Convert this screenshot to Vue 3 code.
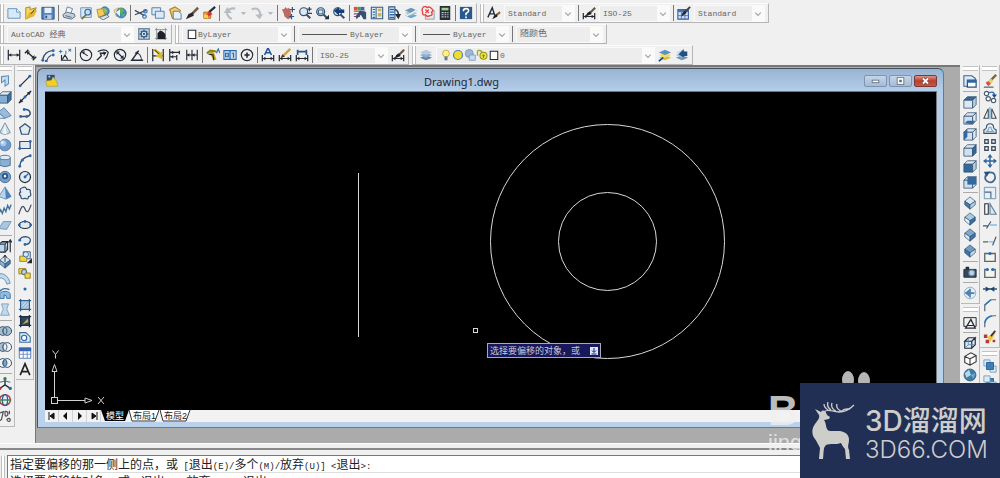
<script setup>
const K = '#222b36'
const B = '#2a68ad'
const D = '#34506f'
const L = '#c3d9ee'
const G = '#f0c22e'

const p = (d, s = K, w = 1.3, f = 'none') =>
  `<path d="${d}" stroke="${s}" stroke-width="${w}" fill="${f}"/>`
const c = (x, y, r, f = 'none', s = K, w = 1.3) =>
  `<circle cx="${x}" cy="${y}" r="${r}" fill="${f}" stroke="${s}" stroke-width="${w}"/>`
const dot = (x, y, r = 1.6, f = B) => `<circle cx="${x}" cy="${y}" r="${r}" fill="${f}"/>`
const fill = (d, f) => `<path d="${d}" fill="${f}"/>`

const box = (top, front, side) =>
  p('M1 6L5 2H15L11 6Z', D, 0.9, top) + p('M1 6H11V15H1Z', D, 0.9, front) + p('M11 6L15 2V11L11 15Z', D, 0.9, side)
const diamond = (a, b, t) =>
  p('M2 6L8 1L14 6L8 10Z', D, 0.8, t) + p('M2 6L8 10V15L2 10Z', D, 0.8, a) + p('M14 6L8 10V15L14 10Z', D, 0.8, b)
const rings = (a, m, b) =>
  c(5.5, 8, 5, a, D, 1.1) + c(10.5, 8, 5, b, D, 1.1) + p('M8 3.8A5 5 0 0 1 8 12.2A5 5 0 0 1 8 3.8Z', D, 1, m)
const lens = p('M9 9L14 14', D, 2.4) + c(6.5, 6.5, 4.5, '#dbe9f6', D, 1.4)
const sheets = (a, b, d) => fill('M1 11L8 8L15 11L8 14Z', a) + fill('M1 8L8 5L15 8L8 11Z', b) + fill('M1 5L8 2L15 5L8 8Z', d)
const dim = p('M1.5 8V15M14.5 8V15M1.5 12H14.5', K, 1.4) + fill('M2 12L5 10V14ZM14 12L11 10V14Z', K)

const icons = {
  new: p('M1 3H11L15 7V14H1Z', '#5d8db8', 1, '#d5e9f8') + p('M11 3V7H15', '#5d8db8', 1, '#fff'),
  open: p('M2 15V2L7 1V4L14 2L11 10Z', '#a88216', 1, '#f5d565') + fill('M2 15L6 7L15 5L11 12Z', '#e7b52a') + p('M8 9L12 4', K, 1),
  save: p('M1 1.5H15V15H1Z', '#294d80', 1, '#5585bd') + fill('M4 2H12V8H4Z', '#e8f1fa') + fill('M4 10H12V15H4Z', '#b6cde5') + fill('M5 11H7V14H5Z', '#294d80'),
  print: p('M4 8L6 1L12 3L10 9', '#687b91', 1, '#eff5fb') + p('M1 10L5 7L14 9L15 12L11 15L2 13Z', '#53667d', 1, '#c3cedb') + p('M4 11L11 13', '#53667d', 1),
  preview: p('M2 2H14V13H2Z', '#638ab3', 1, '#d8eaf9') + c(10, 7, 3.3, '#bfddf4', '#3b6796') + p('M8 10L3 15', '#826b3b', 2),
  publish: c(10, 6, 5, '#4e91cb', '#20669c', 1) + fill('M7 2L12 3L13 7L8 8Z', '#8fc068') + p('M1 4L8 3L10 10L3 13Z', '#b98b21', 1, '#f1cc59') + p('M4 13L12 10L15 12L8 16Z', '#566c84', 1, '#d9e1e9'),
  globe: p('M1 5L6 2L9 9L4 12Z', '#c1a459', 1, '#f7e9b1') + c(9.5, 8, 5.7, '#3a8aca', '#52789a', 1) + fill('M6 4L10 2L13 5L9 9ZM9 10L14 8L12 13Z', '#64b256') + fill('M3 7L8 4V12Z', '#e5f2fb'),
  cut: p('M1 5L12 11M1 10L14 5', '#3f5067', 1.5) + c(12, 12, 2, 'none', B) + c(13, 6, 2, 'none', B),
  copy: p('M1 2H11V10H1Z', '#48779f', 1, '#dceaf7') + p('M5 6H15V14H5Z', '#48779f', 1, '#dceaf7'),
  paste: p('M2 4L8 1L14 5L12 14L5 14Z', '#a67923', 1.2, '#f1cb67') + p('M6 6H12L15 9V15H6Z', '#4b769c', 1, '#e4f1fc'),
  match: p('M15 2L8 9', '#765d4b', 3) + fill('M9 7L10 11L1 15L4 9Z', '#2a2a2a'),
  block: p('M2 7H10V14H2Z', '#a3671e', 1, '#f0a83a') + p('M15 1L8 7', K, 2.4) + fill('M8 6L12 9L3 15L5 10Z', '#cf3730') + fill('M2 10H7V14H2Z', '#f8d23f'),
  undo: p('M10 15Q2 10 6 5Q9 2 14 3', '#b7bcc2', 2.4) + fill('M1 8L5 1L10 8Z', '#b7bcc2'),
  redo: p('M2 4C8 1 13 5 11 12', '#b7bcc2', 2.4) + fill('M6 10L15 9L11 15Z', '#b7bcc2'),
  caret: fill('M2 6H14L8 12Z', '#a9afb7'),
  pan: fill('M1 4L4 3L5 1L7 3L9 2L11 5L12 13L8 15L4 12L3 8Z', '#bc6b63') + p('M13 1V7M10 4H16M12 9V15M9 12H15', '#2c568c', 1.4),
  zoom: lens + p('M13 1V6M10.5 3.5H15.5M11 8.5H16', '#1c4270', 1.3),
  zoomwin: lens + p('M4 4.5H9V9H4Z', '#294f78', 1) + fill('M11 15H16V10Z', K),
  zoomprev: lens + fill('M2 5L8 1V4L14 4V8H8V11Z', '#153e78'),
  props: fill('M1 1H5V5H1Z', '#e04e3f') + fill('M5 1H9V5H5Z', '#45a345') + fill('M9 1H13V5H9Z', '#3b61c1') + p('M1 6H14M1 9H9M1 12H8', '#9c486b', 1.4) + fill('M8 5L15 7V15H12L9 10L4 15L3 12Z', '#374f73'),
  center: p('M1.5 1.5H14.5V14.5H1.5Z', '#315985', 1.2, '#e3edf7') + p('M7 2V14', D, 1) + p('M3 4H6M3 7H6M3 10H6M3 13H6', B, 1.4) + fill('M9 3H13V6H9ZM9 8H13V12H9Z', '#d5b14b'),
  palette: p('M2 1H9V15H2Z', '#285383', 1.2, '#e4eef8') + p('M3 4H8M3 7H8M3 10H8M3 13H8', B, 1.5) + p('M9 4Q13 5 13 10', D, 2) + fill('M9 9H16L13 15Z', K),
  sheet: sheets('#6fa8ca', '#aac4cc', '#6c97bb') + p('M2 12L14 5', '#eff6fb', 1.5),
  markup: p('M5 5H15V15H5Z', '#8994a0', 1, '#e5e8ec') + p('M3 1Q6 0 7 2Q10 0 12 3Q15 5 12 7Q14 11 10 11Q7 13 5 10Q1 11 2 7Q0 4 3 1Z', '#e34644', 1.6, '#fff2f2') + p('M5 4L9 8M9 4L5 8', '#e34644', 1.5),
  calc: fill('M2 0H14V16H2Z', '#262d35') + fill('M4 2H12V5H4Z', '#9fd18c') + p('M4 7.5H12M4 10H12M4 12.5H12', '#b6c1cc', 1.4) + p('M7 6V14M10 6V14', '#262d35', 1),
  help: fill('M1 1H15V15H1Z', '#28588d') + p('M5 6Q5 3 8 3Q11 3 11 5.5Q11 7 8 8.5V10.5', '#fff', 1.8) + fill('M7 12H9V14H7Z', '#fff'),
  tstyle: p('M1 13L6 2L9 11M3 9H8', K, 1.6) + p('M15 7L10 11', '#8d653b', 2.4) + fill('M11 9L12 12L6 15L8 11Z', '#222'),
  dstyle: dim + p('M15 2L9 8', '#6b5440', 2.4) + fill('M9 6L11 9L4 12L6 8Z', '#222'),
  tabstyle: p('M1 4H13V15H1Z', '#2d5aa0', 1.2, '#d5e4f7') + fill('M1 4H13V7H1Z', '#4272bb') + p('M1 11H13M5 7V15M9 7V15', '#4272bb', 1) + p('M15 1L9 7', '#4c4038', 2.4) + fill('M9 5L11 8L5 12L6 8Z', K),
  gear: p('M2 2H14V14H2Z', '#758ba1', 1.6, '#c8d9e8') + p('M8 3V13M3 8H13M4.500 4.500L11.500 11.500M11.500 4.500L4.500 11.500', '#355a81', 1.6) + c(8, 8, 3.3, '#e2edf7', '#355a81', 1.6) + dot(8, 8, 1.3, '#355a81'),
  space: p('M1 3H15M1 13H15M3 1V15M13 1V15', '#7f8993', 1) + fill('M4 14V7L7 4L10 5L13 8V14Z', '#1d2024'),
  d1: p('M1.5 2V14M14.5 2V14M2 8H14', K, 1.4) + fill('M2 8L5 6V10ZM14 8L11 6V10Z', K),
  d2: p('M3 4L12 12M1 6L5 2M10 14L14 10', K, 1.6) + fill('M3 4L7 4L4 8ZM12 12L12 8L8 12Z', K),
  d3: p('M2 13Q4 4 13 3', D, 1.6) + p('M7 14Q8 10 12 8', D, 1.3) + dot(2, 14) + dot(14, 3) + dot(6, 15) + dot(14, 8),
  d4: p('M4 8V14H15M5 13L8 8L11 13', K, 1.3) + p('M1 4H5M3 2V6M9 7V3M12 1L15 4M15 1L12 4', '#3c7cb8', 1.2),
  d5: c(8, 8, 6.5) + p('M4 5L10 9', K, 1.2) + fill('M3 4L7 4L5 7Z', K),
  d6: p('M2 4Q11 0 14 5Q13 10 10 13', K, 1.3) + p('M1 14L6 9L5 6L11 6', K, 1.6) + fill('M8 4L12 5L9 9Z', K),
  d7: c(8, 8, 6.5) + p('M4 4L12 12', K, 1.3) + fill('M4 4H8L4 8ZM12 12H8L12 8Z', K),
  d8: p('M15 14H2L10 3', K, 1.6) + p('M7 5Q13 7 13 14', K, 1.2) + fill('M5 6L9 3L9 7Z', K),
  d9: p('M2 1V15M14 1V15M2 9H14', K, 1.4) + p('M4 2L12 8', '#c9ad0e', 3) + fill('M5 9L13 4V13Z', '#d5bd2d') + p('M4 2L9 7', K, 1),
  d10: p('M2 1V15M2 5H13M2 10H10M10 8V14M13 3V7', K, 1.4) + fill('M3 5L6 3V7ZM3 10L6 8V12Z', K),
  d11: p('M2 2V14M8 2V14M14 2V14M2 8H14', K, 1.3) + fill('M2 8L5 6V10ZM8 8L11 6V10Z', K),
  d12: p('M1 6L5 3L12 4', '#8e8416', 2.5) + fill('M4 4L9 5L12 13L8 14Z', '#bca420') + p('M3 7L8 8L9 14', K, 1.3) + p('M12 6L14 1L16 6', B, 1.2),
  d13: p('M1 3H15V13H1Z', B, 1.2, '#cfe0f2') + p('M8 3V13M3 6H6V10H3ZM10 6H12V11', B, 1.4),
  d14: c(8, 8, 6.5) + p('M8 5V11M5 8H11', K, 1.8),
  d15: dim + p('M4 8L8 0L12 8M5.5 5.5H10.5', '#24549a', 1.8),
  d16: dim + p('M14 1L6 9', '#d39f31', 2.6) + fill('M5 7L8 10L3 11Z', '#5b3525'),
  d17: dim + p('M3 2V8M13 2V8M3 4H13', '#2c5788', 2),
  layers: sheets('#6686aa', '#92aecb', '#b7cadf'),
  layprev: sheets('#d9bc37', '#f0dc6a', '#5d92c5') + p('M1 15L6 11', '#184982', 2),
  laystate: sheets('#7494b8', '#a4bed7', '#c6d7e8') + fill('M4 7L10 1V4H14V9H10V11Z', '#204f83'),
  bulb: c(8, 6, 4.5, '#fff28a', '#b09e24', 1) + fill('M6 10H10V15H6Z', '#637697'),
  sun: c(8, 8, 6, '#f5dc28', '#4c84b3', 1.6),
  vp: c(7, 6, 5.3, '#9bb9d5', '#7190ae', 1) + p('M7 8H15V15H7Z', '#7190ae', 1, '#c8dced'),
  lock: p('M2 9V4Q2 1 5 2Q8 2 8 6', '#a7a622', 1.8) + c(10, 9, 4.7, '#e9e439', '#979615', 1.4) + p('M8 9H12M10 7V12', '#858512', 1.2),
  swatch: p('M3 3H13V14H3Z', K, 1.4, '#fff'),

  poly: p('M4 3L12 2V11L8 14V7L4 10Z', '#608fbc', 1.2, '#c3dcf2'),
  box: box('#e3effa', '#84add4', '#406f9f'),
  wedge: p('M0 7L7 2L15 11L8 14Z', '#527ca6', 1, '#9abcda') + p('M0 7L8 14H0Z', '#527ca6', 1, '#dbe9f5'),
  cone: p('M8 1L14 12Q8 16 2 12Z', '#65869f', 1, '#cadbe8') + fill('M8 2L10 14L5 13Z', '#eff6fa'),
  sphere: c(8, 8, 6.7, '#6e9bcb', '#587ea7', 1) + dot(6, 6, 3.5, '#abc8e8') + dot(5, 5, 1.5, '#e3f0fc'),
  cyl: p('M2 4V13Q8 16 14 13V4', '#486f97', 1, '#8cb0d2') + '<ellipse cx="8" cy="4" rx="6" ry="2.5" fill="#deebf7" stroke="#486f97"/>',
  torus: c(8, 8, 6.5, '#739ecb', '#486c93', 1) + c(8, 7, 2.5, '#eef3f8', '#2b5680', 2),
  pyr: p('M8 1L15 12L9 15L1 12Z', '#648fb9', 1, '#b7d4ec') + fill('M8 1L15 12L9 15Z', '#4e83b7'),
  helix: p('M1 13L3 9L5 13L7 7L9 11L11 4L13 8L15 3', '#43739f', 1.6),
  plane: p('M1 12L6 4H15L10 13Z', '#6b93bb', 1, '#a8c6e2'),
  extr: p('M1 6H8V15H1Z', K, 1.3, '#bfd6eb') + p('M1 6L5 3H11L8 6M8 15L11 12V3', K, 1.2, '#6d9bc6') + p('M14 15V2M12 4L14 1L16 4', K, 1.3),
  press: diamond('#8db5d8', '#4a7cac', '#d7e7f4') + p('M8 0V8M6 3L8 0L10 3', K, 1),
  sweep: p('M1 3Q11 2 14 14L10 15Q8 7 1 8Z', '#688eae', 1, '#c3d9eb'),
  revolve: p('M2 9Q2 5 8 5Q14 5 14 9V13H10Q10 9 7 9V13H2Z', '#326da4', 1, '#8fbde4') + p('M2 5Q6 0 13 3', '#326da4', 1.6),
  loft: p('M4 1H12L10 7L13 14H3L6 7Z', '#7a9fc0', 1, '#c0d8ec'),
  union: rings('#a6bdd0', '#a6bdd0', '#a6bdd0'),
  subtract: rings('#a6bdd0', '#f0f0f0', '#f0f0f0'),
  intersect: rings('#f0f0f0', '#76a5d0', '#f0f0f0'),
  ucs: p('M8 9V2M8 9L2 13M8 9L14 13', K, 1.5) + p('M2 6Q8 3 14 6', D, 1) + dot(2, 13, 1.9, '#b93232') + dot(14, 13, 1.9, B) + dot(8, 2, 1.9, '#357e46'),
  rot3: c(8, 8, 6.2, '#e6eef4', '#a93636', 1.6) + '<ellipse cx="8" cy="8" rx="3" ry="6.2" fill="none" stroke="#28609d" stroke-width="1.4"/>' + p('M1 8H15', '#36834a', 1.6),
  align3: p('M1 5L6 3L4 12L1 14M8 3Q12 2 11 7Q8 10 8 5ZM10 12Q14 9 14 13Q12 16 10 12M13 2V6', '#4d5258', 1.4),

  line: p('M3 13L13 3', K, 1.5) + dot(2.5, 13.5) + dot(13.5, 2.5),
  xline: p('M1 15L15 1', K, 1.6) + fill('M15 1L10 3L13 6ZM1 15L3 10L6 13Z', K) + dot(8, 8),
  pline: p('M3 12H11Q14 11 14 8Q13 4 9 4H7', D, 1.6) + dot(3, 12) + dot(10, 12) + dot(7, 4),
  pent: p('M8 2L14 6.5L12 14H4L2 6.5Z', D, 1.4, '#dfeaf2'),
  rect: p('M2 4H14V12H2Z', D, 1.4, '#dfeaf2') + dot(2, 12) + dot(14, 4),
  arc: p('M2 14Q3 4 14 2', D, 1.5) + dot(2, 14) + dot(5, 7) + dot(14, 2),
  circle: c(8, 8, 6.3, '#e0ebf3', K, 1.4) + p('M8 8L12 4', B, 1.3) + dot(8, 8),
  cloud: p('M5 2Q9 0 10 4Q15 3 14 7Q16 12 12 12Q12 16 8 14Q3 16 3 11Q0 9 3 7Q1 3 5 2Z', D, 1.4, '#e4edf3'),
  spline: p('M1 14Q5 0 8 8T15 3', '#46515e', 1.4),
  ellipse: '<ellipse cx="8" cy="8" rx="6.5" ry="4" fill="#e0ebf3" stroke="#222b36" stroke-width="1.4"/>' + dot(1.5, 8) + dot(14.5, 8) + dot(8, 4),
  earc: p('M2 7Q3 3 9 3Q15 4 14 8Q13 12 8 12', D, 1.4, '#e0ebf3') + dot(2, 7) + dot(8, 12),
  insert: p('M6 2H14V10H6Z', D, 1, '#d8e7f4') + p('M2 7H10V13H2Z', '#927c17', 1, '#ecd747') + c(9, 5, 3, '#d9e8f5', B, 1) + fill('M10 15H16V9Z', K),
  mblock: p('M1 3H9V9H1Z', '#927c17', 1, '#ecd747') + c(7, 7, 3, '#b9d1e6', D, 1) + p('M8 8H14V14H8Z', '#927c17', 1, '#ecd747'),
  point: dot(8, 8, 1.8),
  hatch: fill('M3 3H13V13H3Z', '#bdd4e9') + p('M3 1V15M13 1V15M1 3H15M1 13H15', '#2e5d91', 1.4) + p('M4 12L12 4M4 8L8 4M8 12L12 8', '#769ec3', 1),
  grad: fill('M3 3H13V13H3Z', '#33445d') + p('M3 1V15M13 1V15M1 3H15M1 13H15', '#1e2e47', 1.5) + fill('M5 12L11 5L12 9Z', '#b5ab56'),
  region: p('M2 3H9L14 8V14H2Z', '#416d94', 1.2, '#dceaf5') + c(7, 9, 3, '#fff', B),
  table: p('M1.5 2H14.5V14H1.5Z', '#4775b7', 1, '#fff') + fill('M1 2H15V6H1Z', '#3968b2') + p('M1 9.5H15M6 6V14M10.5 6V14', '#7498c9', 1.2),
  mtext: p('M2.5 15L8 2L13.5 15M4.5 11H11.5', '#222', 1.9),

  nview: p('M1 2H10L14 5V14H1Z', '#31649b', 1.2, '#deebf7') + p('M5 7H15V15H5Z', '#244f83', 1.4, '#fff') + fill('M5 7H15V10H5Z', '#2d64a2'),
  vtop: box('#34699d', '#dce9f5', '#b8d2e8'),
  vbottom: box('#dce9f5', '#cfe1f0', '#dce9f5') + fill('M2 14L5 11H14L11 15Z', '#34699d'),
  vleft: box('#dce9f5', '#cfe1f0', '#dce9f5') + fill('M1 6L5 2V11L1 15Z', '#34699d'),
  vright: box('#dce9f5', '#cfe1f0', '#34699d'),
  vfront: box('#dce9f5', '#34699d', '#b8d2e8'),
  vback: box('#dce9f5', '#cfe1f0', '#dce9f5') + fill('M5 2H15V11H5Z', '#34699d'),
  sw: diamond('#427aae', '#b4cfe6', '#d9e8f4'),
  se: diamond('#eaf2f9', '#3470a8', '#aac9e3'),
  ne: diamond('#d8e8f5', '#3d76aa', '#7fa8cd'),
  nw: diamond('#3d76aa', '#c5daeb', '#6d9bc4'),
  camera: p('M1 5H15V14H1Z', '#232c38', 1, '#36475b') + fill('M3 2H7V5H3Z', '#232c38') + c(10, 9, 3.3, '#b9d3e8', '#6e8aa7'),
  wheel: c(8, 8, 6.6, '#e3edf5', '#91aac2', 1) + p('M3 8H13M8 3V13', '#4f80af', 2) + fill('M2 8L7 4V12Z', '#4f80af'),
  wire2: p('M1 3H15V13H1Z', K, 1.1) + p('M3 15L9 5L14 15ZM5 12H12', K, 1.4, '#f0f0f0'),
  wire3: p('M2 6L6 2H14L10 6ZM2 6H10V14H2ZM10 6L14 2V10L10 14Z', K, 1.3, '#dfeaf4') + p('M6 3V10H13M6 10L3 13', '#5a8ab8', 1),
  hidden: p('M2 5L9 1L15 4V11L8 15L2 12ZM2 5L8 8L15 4M8 8V15', '#333', 1.2, '#fff'),
  real: c(8, 8, 6.8, '#407da9', '#335f86', 1) + fill('M2 6L7 2L9 8L4 11Z', '#b8d5e6') + fill('M9 8L14 6L12 12Z', '#76abd0'),

  erase: p('M15 1L8 8', '#7a662a', 2.6) + fill('M6 8L9 5L12 8L8 12Z', '#e6cf67') + fill('M3 10L6 8L9 11L6 14Z', '#d25050') + p('M1 15H12', K, 1),
  mcopy: c(4, 4, 2.5, '#fff', '#4b5d71') + c(6, 10, 2.5, '#fff', '#4b5d71') + c(12, 12, 2.5, '#fff', '#4b5d71') + p('M7 3Q13 1 13 6', B, 1.6) + fill('M10 5H16L13 9Z', '#194d87'),
  mirror: p('M6 3V14H1ZM10 3V14H15Z', '#3e4953', 1.2, '#f8f8f8') + p('M8 1V15', '#65a9dd', 1.4),
  offset: p('M1 13V9Q4 8 4 6Q4 2 8 2Q12 2 12 6Q12 8 15 9V13Z', D, 1.3) + p('M4 11Q7 9 7 6H9Q9 9 12 11Z', '#65a9dd', 1.3),
  array: p('M2 2H6V6H2ZM10 2H14V6H10ZM2 10H6V14H2ZM10 10H14V14H10Z', '#3f4e60', 1.5, '#fff'),
  move: p('M8 2V14M2 8H14', '#31659b', 1.7) + fill('M8 0L11 4H5ZM8 16L11 12H5ZM0 8L4 5V11ZM16 8L12 5V11Z', '#31659b'),
  rotate: p('M5 3Q14 1 14 9Q12 15 7 14Q1 12 3 6', '#41678d', 2) + fill('M1 2H8L4 8Z', '#244f7e'),
  scale: p('M1.5 1.5H14.5V14.5H1.5Z', '#658ead', 1, '#e4eff7') + p('M2 7H9V14', '#4b6681', 1.3),
  stretch: p('M2 2H6V14H2Z', K, 1.2, '#fff') + p('M8 2V14H15Z', '#60829f', 1.3, '#d7e7f3'),
  trim: p('M0 9H6M4 12L9 4', '#41566b', 1.3) + p('M8 8H16', '#6cb4e7', 1.4),
  extend: p('M0 9H6', '#41566b', 1.3) + p('M7 9H12', '#6cb4e7', 1.3) + p('M11 13L15 3', '#41566b', 1.4),
  breakpt: p('M2 4H14V13H2Z', '#5b666e', 1.5, '#f4f4ee') + dot(8, 4, 1.8),
  brk: p('M5 4H2V13H14V4H11', '#5b666e', 1.5, '#f4f4ee') + dot(5, 4, 1.8) + dot(11, 4, 1.8),
  join: p('M0 8H16', K, 1.4) + fill('M3 5L8 8L3 11ZM13 5L8 8L13 11Z', '#17467c'),
  chamfer: p('M2 15V8L9 2H15', '#626c73', 1.4) + p('M2 8L9 2', '#2875c4', 1.8),
  fillet: p('M2 15V11Q3 3 12 2H15', '#626c73', 1.4) + p('M2 10Q3 4 10 2', '#2875c4', 1.8),
  explode: fill('M1 5H5V9H1ZM3 11H7V15H3ZM11 11H14V14H11Z', '#b23d30') + fill('M5 8L14 3L12 8L8 14Z', '#efc243') + p('M9 7L14 1', '#3e3328', 2),
  order: p('M1 1H8V8H1Z', '#739cbd', 1, '#dceaf5') + p('M8 8H15V15H8Z', '#739cbd', 1, '#dceaf5') + p('M4 4H12V12H4Z', '#225e96', 1, '#3f7fb7'),
  order2: p('M4 4H12V12H4Z', '#225e96', 1, '#3f7fb7') + p('M1 1H8V8H1Z', '#739cbd', 1, '#dceaf5') + p('M8 8H15V15H8Z', '#739cbd', 1, '#dceaf5'),
}

const list = (s) => s.split(' ').map((name, key) => ({ key, name }))
const combos = {
  std: { label: '文字样式', text: 'Standard', width: 71 },
  dimst: { label: '标注样式', text: 'ISO-25', width: 71 },
  tbl: { label: '表格样式', text: 'Standard', width: 71 },
  ws: { label: '工作空间', text: 'AutoCAD 经典', width: 127 },
  color: { label: '颜色', text: 'ByLayer', width: 109, icons: ['swatch'] },
  ltype: { label: '线型', text: 'ByLayer', width: 114, rule: 45 },
  lweight: { label: '线宽', text: 'ByLayer', width: 90, rule: 27 },
  plot: { label: '打印样式', text: '随颜色', width: 87, cjk: true },
  dimst2: { label: '当前标注样式', text: 'ISO-25', width: 72 },
  layer: { label: '图层', text: '0', width: 219, icons: ['bulb', 'sun', 'vp', 'lock', 'swatch'] },
}
const rows = [
  [
    list('new open save | print preview publish globe | cut copy paste match block | undo caret redo caret | pan zoom zoomwin zoomprev | props center palette sheet markup calc | help'),
    list('tstyle std | dstyle dimst | tabstyle tbl'),
  ],
  [list('ws gear space'), list('color | ltype | lweight | plot')],
  [
    list('d1 d2 d3 d4 | d5 d6 d7 d8 | d9 d10 d11 | d12 d13 d14 | d15 d16 d17 | dimst2 dstyle'),
    list('layers layer layprev laystate'),
  ],
]
const leftDocks = [
  { cls: 'solids', bars: [list('poly box wedge cone sphere cyl torus pyr helix plane | extr press sweep revolve loft | union subtract intersect | ucs rot3 align3')] },
  { cls: 'draw', bars: [list('line xline pline pent rect arc circle cloud spline ellipse earc insert mblock point hatch grad region table mtext')] },
]
const rightDocks = [
  { cls: 'views', bars: [list('nview | vtop vbottom vleft vright vfront vback | sw se ne nw | camera | wheel'), list('wire2 | wire3 hidden real')] },
  { cls: 'modify', bars: [list('erase mcopy mirror offset array move rotate scale stretch trim extend breakpt brk join chamfer fillet explode'), list('order order2')] },
]
</script>

<template>
  <div class="app">
    <header class="toolbars">
      <div v-for="(row, r) in rows" :key="r" class="row">
        <div v-for="(bar, b) in row" :key="b" class="bar" role="toolbar">
          <i class="grip"></i>
          <template v-for="t in bar" :key="t.key">
            <i v-if="t.name === '|'" class="sep"></i>
            <label v-else-if="combos[t.name]" class="combo" :style="{ width: combos[t.name].width + 'px' }">
              <svg v-for="(ic, k) in combos[t.name].icons || []" :key="k" class="mini" viewBox="0 0 16 16" v-html="icons[ic]"></svg>
              <i v-if="combos[t.name].rule" class="rule" :style="{ width: combos[t.name].rule + 'px' }"></i>
              <select :aria-label="combos[t.name].label" :class="{ cjk: combos[t.name].cjk }">
                <option>{{ combos[t.name].text }}</option>
              </select>
              <svg class="chev" viewBox="0 0 12 16"><path d="M3 7L6 10L9 7" fill="none" stroke="#a4a4a4" stroke-width="1.3" /></svg>
            </label>
            <button v-else class="tool" :class="{ slim: t.name === 'caret' }" type="button" :aria-label="t.name">
              <svg viewBox="0 0 16 16" v-html="icons[t.name]"></svg>
            </button>
          </template>
        </div>
      </div>
    </header>

    <main class="middle">
      <aside v-for="d in leftDocks" :key="d.cls" class="dock" :class="d.cls">
        <div v-for="(bar, b) in d.bars" :key="b" class="vbar" role="toolbar">
          <i class="vgrip"></i>
          <template v-for="t in bar" :key="t.key">
            <i v-if="t.name === '|'" class="vsep"></i>
            <button v-else class="tool" type="button" :aria-label="t.name"><svg viewBox="0 0 16 16" v-html="icons[t.name]"></svg></button>
          </template>
        </div>
      </aside>

      <section class="workspace">
        <div class="window">
          <div class="title">
            <svg class="doc" viewBox="0 0 16 16">
              <path d="M2 1H11V9H2Z" fill="#2d4b6e" /><path d="M4 2H6V4H4ZM8 4H10V7H8Z" fill="#bcd0e4" />
              <path d="M1 8L7 7L10 4L13 8L15 14H2Z" fill="#f2cf25" stroke="#a98d18" stroke-width=".6" />
            </svg>
            <h1>Drawing1.dwg</h1>
            <div class="controls">
              <button type="button" aria-label="最小化"><svg viewBox="0 0 22 12"><rect x="7" y="5" width="8" height="3" fill="#fff" stroke="#5d6c7d" /></svg></button>
              <button type="button" aria-label="最大化"><svg viewBox="0 0 22 12"><rect x="7" y="2" width="8" height="8" fill="#fff" stroke="#5d6c7d" /><rect x="10" y="5" width="2" height="2" fill="#9fb3c8" stroke="#5d6c7d" /></svg></button>
              <button class="close" type="button" aria-label="关闭"><svg viewBox="0 0 22 12"><path d="M8 3L14 9M14 3L8 9" stroke="#7e3c36" stroke-width="4" /><path d="M8 3L14 9M14 3L8 9" stroke="#fff" stroke-width="2.200" /></svg></button>
            </div>
          </div>
          <div class="client">
            <div class="canvas">
              <svg class="drawing" width="700" height="318">
                <g fill="none" stroke="#d8d8d8" stroke-width="1">
                  <path d="M313.500 81V245" />
                  <circle cx="562.500" cy="149.500" r="117" />
                  <circle cx="562.500" cy="149.500" r="49" />
                  <rect x="428.500" y="236.500" width="4" height="4" />
                </g>
              </svg>
              <div class="prompt">选择要偏移的对象，或<svg viewBox="0 0 8 8"><rect width="8" height="8" fill="#dce6fa" /><path d="M4 1V5M2 3.500L4 5.500L6 3.500M1.500 7H6.500" stroke="#10206c" fill="none" /></svg></div>
              <svg class="ucs" width="62" height="60">
                <g fill="none" stroke="#d0d0d0" stroke-width="1">
                  <path d="M9.500 46V20M12 48.500H40" />
                  <rect x="6.500" y="45.500" width="6" height="6" />
                  <path d="M9.500 12.500L12 19.500H7ZM47 48.500L40 46V51Z" />
                  <path d="M7.500 -1.500L10.500 2.500L13.500 -1.500M10.500 2.500V6.500M53 45L59 52M59 45L53 52" />
                </g>
              </svg>
            </div>
            <nav class="tabs">
              <button type="button" aria-label="第一个"><svg viewBox="0 0 13 12"><path d="M4 2V10M9 3V9L5 6Z" stroke="#111" fill="#111" /></svg></button>
              <button type="button" aria-label="上一个"><svg viewBox="0 0 13 12"><path d="M8 2V10L4 6Z" fill="#111" /></svg></button>
              <button type="button" aria-label="下一个"><svg viewBox="0 0 13 12"><path d="M5 2V10L9 6Z" fill="#111" /></svg></button>
              <button type="button" aria-label="最后一个"><svg viewBox="0 0 13 12"><path d="M10 2V10M5 3V9L9 6Z" stroke="#111" fill="#111" /></svg></button>
              <button class="tab on" type="button"><svg viewBox="0 0 28 12"><path d="M0 0H28L24 11H4Z" fill="#000" /></svg><span>模型</span></button>
              <button class="tab" type="button"><svg viewBox="0 0 31 12"><path d="M0 0L3 11H26L30 0" fill="#fff" stroke="#333" /></svg><span>布局1</span></button>
              <button class="tab" type="button"><svg viewBox="0 0 31 12"><path d="M0 0L3 11H26L30 0" fill="#fff" stroke="#333" /></svg><span>布局2</span></button>
            </nav>
          </div>
        </div>
      </section>

      <aside v-for="d in rightDocks" :key="d.cls" class="dock" :class="d.cls">
        <div v-for="(bar, b) in d.bars" :key="b" class="vbar" role="toolbar">
          <i class="vgrip"></i>
          <template v-for="t in bar" :key="t.key">
            <i v-if="t.name === '|'" class="vsep"></i>
            <button v-else class="tool" type="button" :aria-label="t.name"><svg viewBox="0 0 16 16" v-html="icons[t.name]"></svg></button>
          </template>
        </div>
      </aside>
    </main>

    <footer class="command">
      <i class="grip"></i>
      <div class="log">
        <p>指定要偏移的那一侧上的点，或<small> [</small>退出<small>(E)/</small>多个<small>(M)/</small>放弃<small>(U)] &lt;</small>退出<small>&gt;:</small></p>
        <p>选择要偏移的对象，或<small> [</small>退出<small>(E)/</small>放弃<small>(U)] &lt;</small>退出<small>&gt;:</small></p>
      </div>
    </footer>

    <div class="mark">
      <svg viewBox="0 0 40 24"><ellipse cx="8" cy="11" rx="6" ry="9" /><ellipse cx="24" cy="12" rx="6" ry="9" /></svg>
      <b>Ba</b>
      <span>jing</span>
    </div>

    <div class="brand">
      <svg class="deer" viewBox="0 0 44 60">
        <path d="M3 7L9 10C11 7 14 9 15 13L18 15L17 17L12 18C15 22 13 28 18 29L28 29C34 30 37 33 37 38C37 42 35 44 37 48L38 57H34L33 47C31 45 30 43 29 41C24 43 18 41 14 43C11 46 12 49 11 57H7L8 46C6 42 5 40 3 37C-1 32 0 26 3 22C6 18 8 16 7 13Z" fill="#cdcdca" />
        <path d="M12 10C16 6 20 10 27 10C34 10 38 7 42 3M16 8C13 6 12 4 12 2M19 8C16 6 15 3 16 0M24 9C20 7 19 4 20 1M31 10C26 8 24 5 25 2M29 10C32 6 35 7 38 7" fill="none" stroke="#cdcdca" stroke-width="1.300" />
      </svg>
      <div class="words">
        <strong>3D溜溜网</strong>
        <span>3D66.COM</span>
      </div>
    </div>
  </div>
</template>

<style>
body { margin: 0; overflow: hidden; }
</style>

<style scoped>
* { box-sizing: border-box; }
.app {
  position: relative;
  display: flex;
  flex-direction: column;
  height: 100vh;
  overflow: hidden;
  background: #f0f0f0;
  font-family: "Liberation Sans", "Noto Sans CJK SC", sans-serif;
  color: #222;
}
button { margin: 0; padding: 0; border: 0; background: none; font: inherit; color: inherit; }
svg { display: block; }
i { display: block; flex: none; }

.toolbars { display: flex; flex-direction: column; gap: 1px; padding-top: 3px; flex: none; }
.row { display: flex; gap: 3px; height: 20px; }
.bar {
  display: flex;
  align-items: center;
  gap: 3px;
  padding-right: 3px;
  border: 1px solid #b5b5b5;
  border-width: 0 1px 1px 0;
  border-top: 1px solid #fbfbfb;
}
.grip { width: 4px; height: 18px; border: 1px solid #bdbdbd; border-width: 0 1px; background: #fff; }
.sep { width: 1px; height: 16px; background: #777; }
.tool { flex: none; width: 14px; height: 14px; }
.tool svg { width: 14px; height: 14px; }
.slim { width: 7px; }
.slim svg { width: 7px; }
.combo {
  display: flex;
  align-items: center;
  height: 17px;
  padding-left: 3px;
  border: 1px solid #fafafa;
  background: #ededed;
}
.mini { width: 12px; height: 12px; flex: none; }
.rule { height: 1px; background: #555; margin-right: 3px; }
select {
  appearance: none;
  flex: 1;
  min-width: 0;
  height: 15px;
  padding: 0;
  border: 0;
  background: transparent;
  font: 8px "Liberation Mono", "Noto Sans CJK SC", monospace;
  color: #666;
}
select.cjk { font-size: 9px; }
.chev { width: 12px; height: 15px; background: #fafafa; flex: none; }

.middle { display: flex; flex: 1; min-height: 0; }
.dock { display: flex; flex-direction: column; gap: 2px; overflow: hidden; flex: none; }
.solids { width: 15px; }
.draw { width: 19px; margin-right: 1px; padding-left: 1px; }
.views { width: 20px; padding-left: 1px; }
.modify { width: 20px; }
.vbar {
  display: flex;
  flex-direction: column;
  align-items: center;
  gap: 2px;
  padding: 1px 0 3px;
  border: 1px solid #b9b9b9;
  border-width: 0 1px 1px 0;
}
.solids .vbar { align-items: flex-end; padding-right: 2px; }
.vgrip { width: 15px; height: 5px; border: 1px solid #c2c2c2; border-width: 1px 0; background: #fff; margin-bottom: 1px; }
.vsep { width: 15px; height: 1px; margin: 1px 0; background: #aaa; }

.workspace {
  display: flex;
  flex: 1;
  min-width: 0;
  padding: 1px 16px 15px 1px;
  border: solid #777;
  border-width: 2px 0 0 1px;
  background: #ababab;
}
.window {
  display: flex;
  flex: 1;
  min-width: 0;
  flex-direction: column;
  padding: 0 6px 5px 7px;
  border: 1px solid #46525e;
  border-bottom-color: #348fa6;
  border-right-color: #348fa6;
  border-radius: 6px 6px 0 0;
  background: linear-gradient(#99b4d3, #b4cde8 22px, #b9d1ea 50%, #b9d1ea);
}
.title { display: flex; align-items: center; height: 22px; padding-top: 2px; flex: none; }
.doc { width: 14px; height: 14px; }
h1 { flex: 1; margin: 0; font: 11px "Noto Sans", sans-serif; text-align: center; color: #1c2733; }
.controls { display: flex; gap: 2px; }
.controls button { width: 23px; height: 12px; border: 1px solid #7d95b0; border-radius: 2px; background: linear-gradient(#c6d6e8, #a4bbd5); }
.controls .close { border-color: #7b3a35; background: linear-gradient(#dc958a, #b83e2d 50%, #c95746); }
.controls svg { width: 21px; height: 10px; }
.client { display: flex; flex: 1; flex-direction: column; min-height: 0; border: 1px solid #777; border-width: 1px 1px 0 0; }
.canvas { position: relative; flex: 1; min-height: 0; overflow: hidden; background: #000; }
.drawing { position: absolute; top: 0; left: 0; }
.prompt {
  position: absolute;
  top: 251px;
  left: 442px;
  display: flex;
  align-items: center;
  justify-content: space-between;
  width: 114px;
  height: 15px;
  padding: 0 2px;
  border: 1px solid #a8a8c0;
  background: #18185c;
  font-size: 9px;
  color: #c8c8da;
}
.prompt svg { width: 8px; height: 8px; }
.ucs { position: absolute; left: 0; bottom: -2px; overflow: visible; }
.tabs { display: flex; flex: none; height: 12px; background: #f2f2f2; }
.tabs button { width: 14px; border-right: 1px solid #d2d2d2; }
.tabs button svg { width: 13px; height: 12px; }
.tabs .tab { display: grid; width: 31px; border: 0; place-items: center; font-size: 9px; line-height: 12px; color: #222; }
.tabs .tab > * { grid-area: 1 / 1; }
.tabs .tab svg { width: 31px; }
.tabs .on, .tabs .on svg { width: 28px; color: #fff; }

.command { display: flex; flex: none; height: 35px; padding-top: 4px; border-top: 1px solid #fff; background: linear-gradient(#f0f0f0 4px, #8a8a8a 4px, #8a8a8a 6px, #f0f0f0 6px); }
.command .grip { height: 22px; margin: 8px 2px 0 1px; }
.log { flex: 1; margin-top: 7px; padding-left: 2px; border: 1px solid #777; border-width: 1px 0 0 1px; background: #fff; overflow: hidden; }
.log p { margin: 0; height: 17px; font: 12px/15px "Noto Sans CJK SC", sans-serif; white-space: pre; color: #222; border-bottom: 1px solid #ddd; }
.log small { font: 9px "Liberation Mono", monospace; }

.mark { position: absolute; right: 132px; bottom: 21px; width: 100px; color: rgba(240, 240, 240, .8); }
.mark svg { width: 40px; height: 24px; margin-left: 72px; fill: #b5b5b5; }
.mark b { display: block; width: 32px; overflow: hidden; font-size: 42px; line-height: 36px; }
.mark span { display: block; width: 32px; overflow: hidden; font-size: 22px; line-height: 28px; }
.brand {
  position: absolute;
  right: 0;
  bottom: 0;
  display: flex;
  gap: 9px;
  width: 200px;
  height: 95px;
  padding: 19px 0 0 12px;
  background: #222f55;
  color: #cdcdca;
}
.deer { width: 44px; height: 60px; flex: none; }
.words { display: flex; flex-direction: column; padding-top: 2px; white-space: nowrap; }
.words strong { font: 500 28px/34px Inter, "Noto Sans CJK SC", sans-serif; }
.words span { font: 300 24px/24px Inter, sans-serif; }
</style>
